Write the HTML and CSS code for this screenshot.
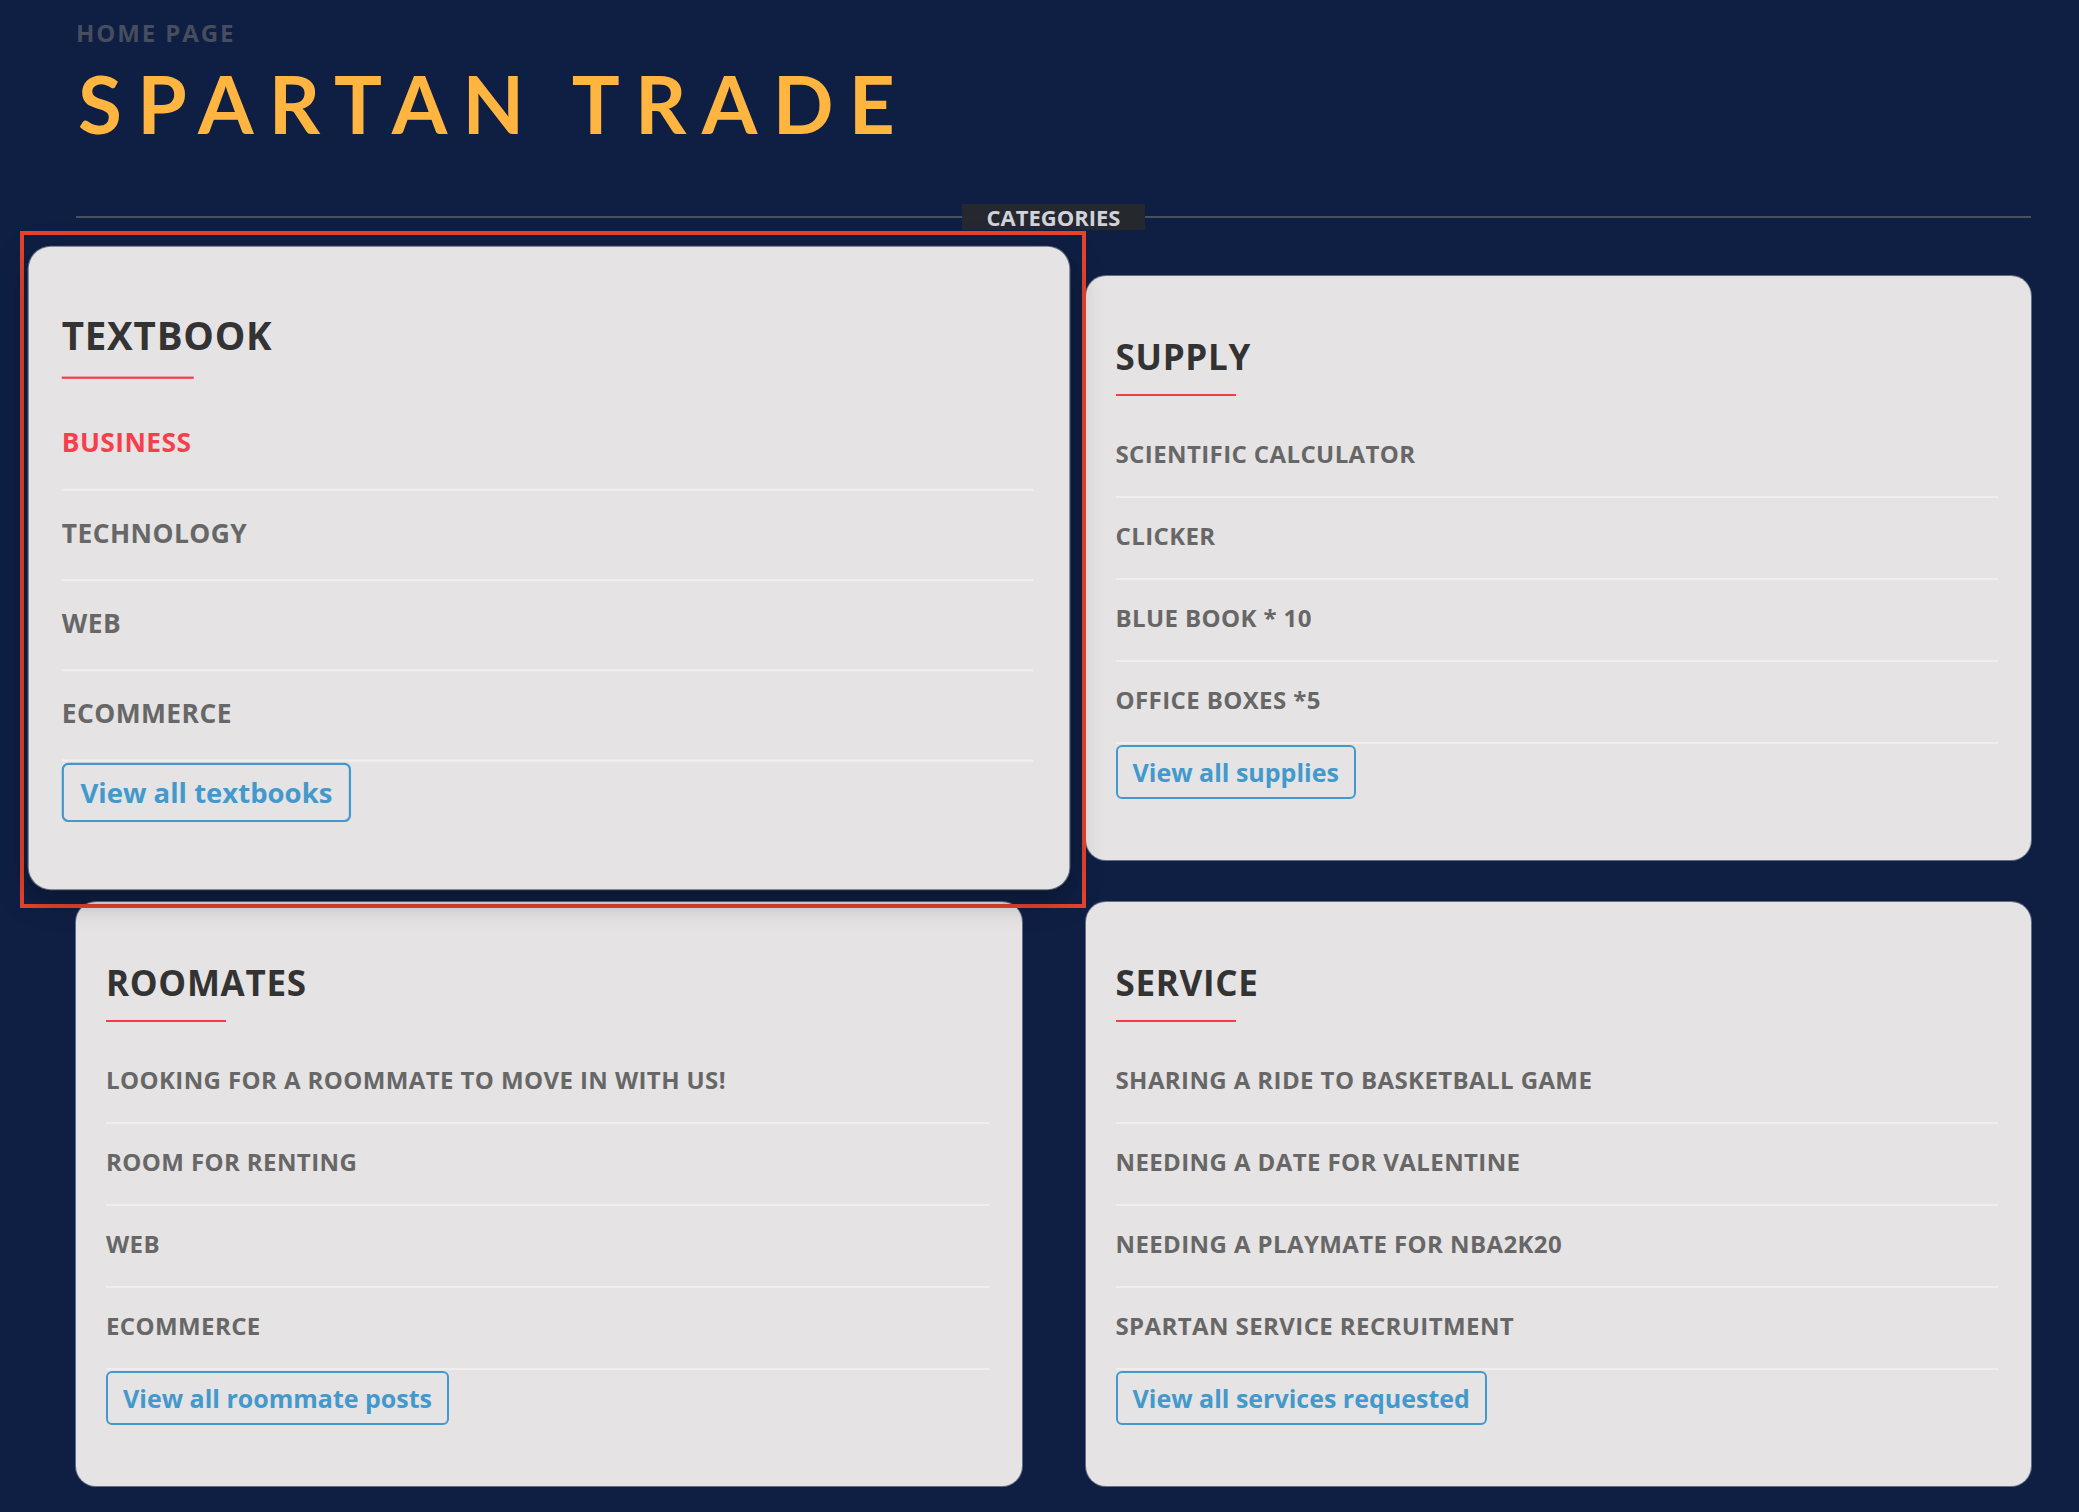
FILE: index.html
```html
<!DOCTYPE html>
<html lang="en">
<head>
<meta charset="utf-8">
<title>Spartan Trade</title>
<link rel="stylesheet" href="styles.css">
</head>
<body>
<div class="page">
  <header class="masthead">
    <div class="eyebrow">HOME PAGE</div>
    <h1 class="brand">SPARTAN TRADE</h1>
  </header>

  <div class="section-head">
    <span class="rule"></span>
    <span class="section-label">CATEGORIES</span>
    <span class="rule"></span>
  </div>

  <div class="grid">
    <section class="card card-active">
      <h2 class="card-title">TEXTBOOK</h2>
      <span class="title-bar"></span>
      <ul class="items">
        <li class="item item-hot">BUSINESS</li>
        <li class="item">TECHNOLOGY</li>
        <li class="item">WEB</li>
        <li class="item">ECOMMERCE</li>
      </ul>
      <a class="btn">View all textbooks</a>
    </section>

    <section class="card">
      <h2 class="card-title">SUPPLY</h2>
      <span class="title-bar"></span>
      <ul class="items">
        <li class="item">SCIENTIFIC CALCULATOR</li>
        <li class="item">CLICKER</li>
        <li class="item">BLUE BOOK * 10</li>
        <li class="item">OFFICE BOXES *5</li>
      </ul>
      <a class="btn">View all supplies</a>
    </section>

    <section class="card">
      <h2 class="card-title">ROOMATES</h2>
      <span class="title-bar"></span>
      <ul class="items">
        <li class="item">LOOKING FOR A ROOMMATE TO MOVE IN WITH US!</li>
        <li class="item">ROOM FOR RENTING</li>
        <li class="item">WEB</li>
        <li class="item">ECOMMERCE</li>
      </ul>
      <a class="btn">View all roommate posts</a>
    </section>

    <section class="card">
      <h2 class="card-title">SERVICE</h2>
      <span class="title-bar"></span>
      <ul class="items">
        <li class="item">SHARING A RIDE TO BASKETBALL GAME</li>
        <li class="item">NEEDING A DATE FOR VALENTINE</li>
        <li class="item">NEEDING A PLAYMATE FOR NBA2K20</li>
        <li class="item">SPARTAN SERVICE RECRUITMENT</li>
      </ul>
      <a class="btn">View all services requested</a>
    </section>
  </div>
</div>
<div class="highlight"></div>
</body>
</html>
```
FILE: styles.css
```css
* { box-sizing: border-box; }

html, body {
  margin: 0;
  background: #0f1f44;
}

body {
  position: relative;
  min-height: 1512px;
  font-family: "Open Sans", "Noto Sans", sans-serif;
}

.page {
  padding: 0 48px 0 76px;
}

.masthead {
  padding-top: 21px;
}

.eyebrow {
  font-size: 24px;
  line-height: 24px;
  font-weight: 700;
  letter-spacing: 1.9px;
  color: #474c5e;
}

.brand {
  margin: 18px 0 0 2px;
  font-family: "Lato", "Open Sans", sans-serif;
  font-size: 80px;
  line-height: 80px;
  font-weight: 700;
  letter-spacing: 15.3px;
  color: #ffb53f;
}

.section-head {
  display: flex;
  align-items: center;
  margin-top: 61px;
  height: 26px;
}

.rule {
  flex: 1;
  height: 2px;
  background: #4b5061;
}

.section-label {
  background: #26282f;
  color: #d0d3dc;
  font-size: 22px;
  font-weight: 700;
  line-height: 26px;
  height: 26px;
  padding: 0 25px;
}

.grid {
  display: grid;
  grid-template-columns: 1fr 1fr;
  column-gap: 64px;
  row-gap: 42px;
  margin-top: 46px;
}

.card {
  position: relative;
  background: #e5e3e4;
  border-radius: 20px;
  padding: 60px 33px 61px 30px;
  box-shadow: 0 0 0 1px rgba(255, 255, 255, 0.35);
}

.card-active {
  transform: scale(1.1);
  z-index: 2;
  box-shadow: 0 0 0 1px rgba(255, 255, 255, 0.35), 0 8px 28px rgba(0, 0, 0, 0.35);
}

.card-title {
  margin: 0;
  font-size: 35px;
  line-height: 42px;
  font-weight: 700;
  letter-spacing: 0.7px;
  color: #333333;
}

.title-bar {
  display: block;
  width: 120px;
  height: 2px;
  margin-top: 16px;
  background: #f33c48;
}

.items {
  list-style: none;
  margin: 20px 0 0;
  padding: 0;
}

.item {
  padding: 20px 0 24px;
  border-bottom: 2px solid #f0eff0;
  font-size: 24px;
  line-height: 36px;
  font-weight: 700;
  letter-spacing: 0.4px;
  color: #676767;
  white-space: nowrap;
}

.item-hot {
  color: #f63e4c;
}

.btn {
  display: inline-block;
  margin-top: 1px;
  padding: 0 15px;
  border: 2px solid #4399cc;
  border-radius: 6px;
  font-size: 25px;
  line-height: 50px;
  font-weight: 700;
  color: #4399cc;
  cursor: pointer;
}

.highlight {
  position: absolute;
  left: 20px;
  top: 231px;
  width: 1066px;
  height: 677px;
  border: 4px solid #e8432c;
  pointer-events: none;
}
```
